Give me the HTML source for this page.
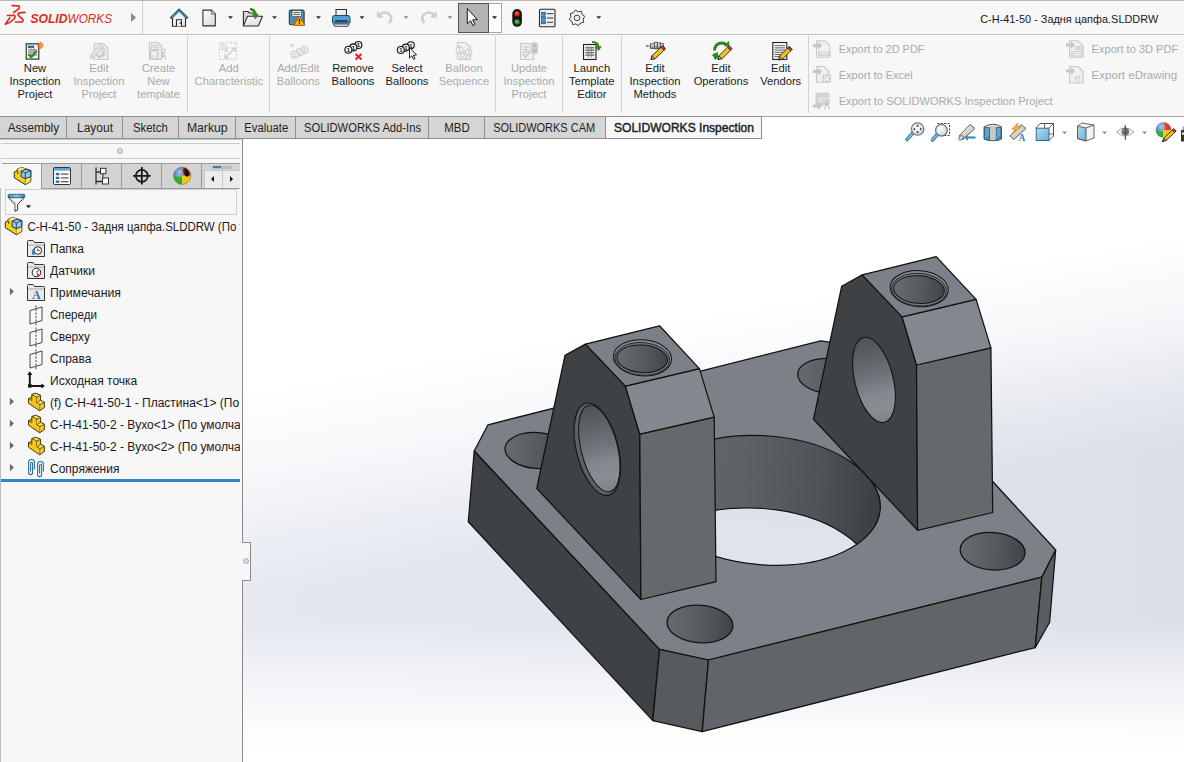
<!DOCTYPE html>
<html><head><meta charset="utf-8"><title>SOLIDWORKS</title>
<style>html,body{margin:0;padding:0;width:1184px;height:762px;overflow:hidden;background:#f7f7f7;font-family:'Liberation Sans', sans-serif;}</style>
</head><body>
<svg width="1184" height="762" viewBox="0 0 1184 762" style="display:block;font-family:'Liberation Sans', sans-serif"><rect x="0" y="0" width="1184" height="762" fill="#f7f7f7"/>
<defs><linearGradient id="vband" gradientUnits="userSpaceOnUse" x1="243" y1="0" x2="1184" y2="0"><stop offset="0" stop-color="#e5e8f1"/><stop offset="1" stop-color="#dcdfe9"/></linearGradient><linearGradient id="vtop" gradientUnits="userSpaceOnUse" x1="243" y1="390" x2="276.7" y2="594.4"><stop offset="0" stop-color="#ffffff" stop-opacity="1"/><stop offset="0.38" stop-color="#ffffff" stop-opacity="0.72"/><stop offset="0.71" stop-color="#ffffff" stop-opacity="0.3"/><stop offset="1" stop-color="#ffffff" stop-opacity="0"/></linearGradient><linearGradient id="vbot" gradientUnits="userSpaceOnUse" x1="0" y1="620" x2="0" y2="762"><stop offset="0" stop-color="#ffffff" stop-opacity="0"/><stop offset="0.352" stop-color="#ffffff" stop-opacity="0.45"/><stop offset="0.81" stop-color="#ffffff" stop-opacity="0.95"/><stop offset="1" stop-color="#ffffff" stop-opacity="1"/></linearGradient></defs>
<rect x="243" y="117" width="941" height="645" fill="url(#vband)"/>
<rect x="243" y="117" width="941" height="645" fill="url(#vtop)"/>
<rect x="243" y="117" width="941" height="645" fill="url(#vbot)"/>
<rect x="0" y="0" width="1184" height="1" fill="#b9b9b9"/>
<rect x="0" y="34" width="1184" height="1" fill="#c4c4c4"/>
<rect x="142" y="1" width="1" height="33" fill="#cfcfcf"/>
<rect x="0" y="116" width="1184" height="1" fill="#a6a6a6"/>
<rect x="187" y="36" width="1" height="77" fill="#d2d2d2"/>
<rect x="269" y="36" width="1" height="77" fill="#d2d2d2"/>
<rect x="495" y="36" width="1" height="77" fill="#d2d2d2"/>
<rect x="562" y="36" width="1" height="77" fill="#d2d2d2"/>
<rect x="621" y="36" width="1" height="77" fill="#d2d2d2"/>
<rect x="808" y="36" width="1" height="77" fill="#d2d2d2"/>
<rect x="0" y="117" width="761" height="21" fill="#d5d5d5"/>
<rect x="66" y="117" width="1" height="21" fill="#8e8e8e"/>
<text x="7.7" y="132" font-size="12.5" fill="#1e1e1e" font-weight="400" text-anchor="start" textLength="51.5" lengthAdjust="spacingAndGlyphs">Assembly</text>
<rect x="122" y="117" width="1" height="21" fill="#8e8e8e"/>
<text x="77" y="132" font-size="12.5" fill="#1e1e1e" font-weight="400" text-anchor="start" textLength="36" lengthAdjust="spacingAndGlyphs">Layout</text>
<rect x="178" y="117" width="1" height="21" fill="#8e8e8e"/>
<text x="133" y="132" font-size="12.5" fill="#1e1e1e" font-weight="400" text-anchor="start" textLength="34.7" lengthAdjust="spacingAndGlyphs">Sketch</text>
<rect x="235" y="117" width="1" height="21" fill="#8e8e8e"/>
<text x="186.9" y="132" font-size="12.5" fill="#1e1e1e" font-weight="400" text-anchor="start" textLength="40.7" lengthAdjust="spacingAndGlyphs">Markup</text>
<rect x="295" y="117" width="1" height="21" fill="#8e8e8e"/>
<text x="244.3" y="132" font-size="12.5" fill="#1e1e1e" font-weight="400" text-anchor="start" textLength="43.9" lengthAdjust="spacingAndGlyphs">Evaluate</text>
<rect x="428" y="117" width="1" height="21" fill="#8e8e8e"/>
<text x="304" y="132" font-size="12.5" fill="#1e1e1e" font-weight="400" text-anchor="start" textLength="117" lengthAdjust="spacingAndGlyphs">SOLIDWORKS Add-Ins</text>
<rect x="484" y="117" width="1" height="21" fill="#8e8e8e"/>
<text x="444.3" y="132" font-size="12.5" fill="#1e1e1e" font-weight="400" text-anchor="start" textLength="25.4" lengthAdjust="spacingAndGlyphs">MBD</text>
<rect x="605" y="117" width="1" height="21" fill="#8e8e8e"/>
<text x="493.2" y="132" font-size="12.5" fill="#1e1e1e" font-weight="400" text-anchor="start" textLength="102" lengthAdjust="spacingAndGlyphs">SOLIDWORKS CAM</text>
<rect x="0" y="116" width="761" height="1" fill="#8e8e8e"/>
<rect x="0" y="138" width="762" height="1" fill="#8e8e8e"/>
<rect x="606" y="117" width="155" height="21" fill="#f7f7f7"/>
<rect x="761" y="116" width="1" height="23" fill="#8e8e8e"/>
<text x="614" y="132" font-size="12.5" fill="#1e1e1e" font-weight="400" text-anchor="start" textLength="140" lengthAdjust="spacingAndGlyphs" stroke="#1e1e1e" stroke-width="0.45">SOLIDWORKS Inspection</text>
<rect x="0" y="139" width="242" height="623" fill="#f7f7f7"/>
<rect x="242" y="139" width="1" height="623" fill="#8a8a8a"/>
<rect x="0" y="188" width="1" height="574" fill="#bdbdbd"/>
<rect x="0" y="139" width="242" height="1" fill="#b3cbd0"/>
<rect x="1" y="143" width="239" height="1" fill="#cdcdcd"/>
<rect x="1" y="158" width="239" height="1" fill="#cdcdcd"/>
<circle cx="120" cy="151" r="2.6" fill="#d8d8d8" stroke="#a8a8a8" stroke-width="0.8"/>
<rect x="2" y="163" width="238" height="1" fill="#9a9a9a"/>
<rect x="41" y="164" width="199" height="24" fill="#d3d3d3"/>
<rect x="2" y="164" width="39" height="25" fill="#f7f7f7"/>
<rect x="41" y="188" width="199" height="1" fill="#9a9a9a"/>
<rect x="41" y="164" width="1" height="24" fill="#9a9a9a"/>
<rect x="81" y="164" width="1" height="24" fill="#9a9a9a"/>
<rect x="121" y="164" width="1" height="24" fill="#9a9a9a"/>
<rect x="161" y="164" width="1" height="24" fill="#9a9a9a"/>
<rect x="201" y="164" width="1" height="24" fill="#9a9a9a"/>
<rect x="204" y="170" width="36" height="18" fill="#ececec"/>
<rect x="204" y="170" width="36" height="1" fill="#c8c8c8"/>
<rect x="204" y="170" width="1" height="18" fill="#c8c8c8"/>
<rect x="222" y="170" width="1" height="18" fill="#c8c8c8"/>
<polygon points="211,179 214,176 214,182" fill="#111"/>
<polygon points="233,179 230,176 230,182" fill="#111"/>
<rect x="212" y="166" width="20" height="3" fill="#b8bcc0"/>
<rect x="213" y="166" width="8" height="2" fill="#3b7fb8"/>
<rect x="5.5" y="189.5" width="231" height="25" fill="#f7f7f7" stroke="#cfcfcf" stroke-width="1"/>
<clipPath id="treeclip"><rect x="0" y="215" width="240" height="265"/></clipPath>
<g clip-path="url(#treeclip)">
<text x="27.5" y="231" font-size="12" fill="#1a1a1a" font-weight="400" text-anchor="start" textLength="275.6" lengthAdjust="spacingAndGlyphs">С-Н-41-50 - Задня цапфа.SLDDRW (По умолчанию)</text>
<text x="50" y="253" font-size="12" fill="#1a1a1a" font-weight="400" text-anchor="start">Папка</text>
<text x="50" y="275" font-size="12" fill="#1a1a1a" font-weight="400" text-anchor="start">Датчики</text>
<text x="50" y="297" font-size="12" fill="#1a1a1a" font-weight="400" text-anchor="start" textLength="71" lengthAdjust="spacingAndGlyphs">Примечания</text>
<polygon points="9.9,287.8 13.9,291.5 9.9,295.2" fill="#6a6a6a"/>
<text x="50" y="319" font-size="12" fill="#1a1a1a" font-weight="400" text-anchor="start" textLength="47" lengthAdjust="spacingAndGlyphs">Спереди</text>
<text x="50" y="341" font-size="12" fill="#1a1a1a" font-weight="400" text-anchor="start">Сверху</text>
<text x="50" y="363" font-size="12" fill="#1a1a1a" font-weight="400" text-anchor="start">Справа</text>
<text x="50" y="385" font-size="12" fill="#1a1a1a" font-weight="400" text-anchor="start">Исходная точка</text>
<text x="50" y="407" font-size="12" fill="#1a1a1a" font-weight="400" text-anchor="start">(f) С-Н-41-50-1 - Пластина&lt;1&gt; (По умолчанию)</text>
<polygon points="9.9,397.8 13.9,401.5 9.9,405.2" fill="#6a6a6a"/>
<text x="50" y="429" font-size="12" fill="#1a1a1a" font-weight="400" text-anchor="start">С-Н-41-50-2 - Вухо&lt;1&gt; (По умолчанию)</text>
<polygon points="9.9,419.8 13.9,423.5 9.9,427.2" fill="#6a6a6a"/>
<text x="50" y="451" font-size="12" fill="#1a1a1a" font-weight="400" text-anchor="start">С-Н-41-50-2 - Вухо&lt;2&gt; (По умолчанию)</text>
<polygon points="9.9,441.8 13.9,445.5 9.9,449.2" fill="#6a6a6a"/>
<text x="50" y="473" font-size="12" fill="#1a1a1a" font-weight="400" text-anchor="start">Сопряжения</text>
<polygon points="9.9,463.8 13.9,467.5 9.9,471.2" fill="#6a6a6a"/>
</g>
<rect x="1" y="479" width="239" height="3" fill="#2e86c6"/>
<path d="M242.5,542.5 H250.5 V580.5 H242.5" fill="#f7f7f7" stroke="#8a8a8a" stroke-width="1"/>
<rect x="242" y="543" width="2" height="37" fill="#f7f7f7"/>
<circle cx="246" cy="561" r="2.6" fill="#d8d8d8" stroke="#a8a8a8" stroke-width="0.8"/>
<defs><linearGradient id="gwall" x1="0" y1="0" x2="1" y2="0"><stop offset="0" stop-color="#65696d"/><stop offset="0.4" stop-color="#5e6266"/><stop offset="0.75" stop-color="#4e5155"/><stop offset="0.92" stop-color="#414447"/><stop offset="1" stop-color="#3c3f42"/></linearGradient><linearGradient id="ghole" x1="0" y1="0" x2="1" y2="0"><stop offset="0" stop-color="#676b70"/><stop offset="0.25" stop-color="#606367"/><stop offset="0.55" stop-color="#56595d"/><stop offset="0.8" stop-color="#4a4d51"/><stop offset="1" stop-color="#404347"/></linearGradient><linearGradient id="gside" x1="0" y1="0" x2="0" y2="1"><stop offset="0" stop-color="#4f5257"/><stop offset="0.15" stop-color="#585b60"/><stop offset="0.45" stop-color="#6e7278"/><stop offset="0.68" stop-color="#84888f"/><stop offset="0.85" stop-color="#888c93"/><stop offset="1" stop-color="#7e8288"/></linearGradient><linearGradient id="gthru" x1="0" y1="0" x2="0" y2="1"><stop offset="0" stop-color="#dfe2ea"/><stop offset="1" stop-color="#e3e6ee"/></linearGradient></defs>
<polygon points="488,424.8 820.7,340.8 870,348 1055.7,550 1041.8,577.2 708.5,660 659.5,649.4 474.2,451" fill="#7c8188" stroke="#111111" stroke-width="1.25" stroke-linejoin="round"/>
<polygon points="474.2,451 659.5,649.4 652.8,720.6 468.3,521.8" fill="#3f4244" stroke="#111111" stroke-width="1.25" stroke-linejoin="round"/>
<polygon points="659.5,649.4 708.5,660 702.2,731.6 652.8,720.6" fill="#575a5e" stroke="#111111" stroke-width="1.25" stroke-linejoin="round"/>
<polygon points="708.5,660 1041.8,577.2 1035.2,647.6 702.2,731.6" fill="#616468" stroke="#111111" stroke-width="1.25" stroke-linejoin="round"/>
<polygon points="1041.8,577.2 1055.7,550 1049.6,622.3 1035.2,647.6" fill="#5a5e61" stroke="#111111" stroke-width="1.25" stroke-linejoin="round"/>
<ellipse cx="537" cy="450.5" rx="32" ry="18" transform="rotate(4 537 450.5)" fill="url(#ghole)" stroke="#111111" stroke-width="1.25" stroke-linejoin="round"/>
<ellipse cx="829.6" cy="375.9" rx="32" ry="17.5" transform="rotate(4 829.6 375.9)" fill="url(#ghole)" stroke="#111111" stroke-width="1.25" stroke-linejoin="round"/>
<ellipse cx="700" cy="624" rx="33" ry="18.7" transform="rotate(4 700 624)" fill="url(#ghole)" stroke="#111111" stroke-width="1.25" stroke-linejoin="round"/>
<ellipse cx="992.6" cy="551.2" rx="32.5" ry="18.7" transform="rotate(4 992.6 551.2)" fill="url(#ghole)" stroke="#111111" stroke-width="1.25" stroke-linejoin="round"/>
<clipPath id="bigtop"><ellipse cx="764.6" cy="500.3" rx="116" ry="64.5" transform="rotate(4.5 764.6 500.3)"/></clipPath>
<ellipse cx="764.6" cy="500.3" rx="116" ry="64.5" transform="rotate(4.5 764.6 500.3)" fill="url(#gwall)"/>
<g clip-path="url(#bigtop)"><ellipse cx="758.3000000000001" cy="572.8" rx="116" ry="64.5" transform="rotate(4.5 758.3000000000001 572.8)" fill="url(#gthru)" stroke="#111111" stroke-width="1.25" stroke-linejoin="round"/></g>
<ellipse cx="764.6" cy="500.3" rx="116" ry="64.5" transform="rotate(4.5 764.6 500.3)" fill="none" stroke="#111111" stroke-width="1.25" stroke-linejoin="round"/>
<polygon points="565,355.4 585.5,344.1 625.4,386.1 639.8,434.2 640.9,599.5 536.8,488.5" fill="#3f4245" stroke="#111111" stroke-width="1.25" stroke-linejoin="round"/>
<polygon points="639.8,434.2 714.2,417.1 716,581.7 640.9,599.5" fill="#66696c" stroke="#111111" stroke-width="1.25" stroke-linejoin="round"/>
<polygon points="625.4,386.1 699.4,368.6 714.2,417.1 639.8,434.2" fill="#84888f" stroke="#111111" stroke-width="1.25" stroke-linejoin="round"/>
<polygon points="585.5,344.1 659.5,325.8 699.4,368.6 625.4,386.1" fill="#7c8088" stroke="#111111" stroke-width="1.25" stroke-linejoin="round"/>
<ellipse cx="642.5" cy="357.8" rx="29.1" ry="18" transform="rotate(4 642.5 358)" fill="#858a8f" stroke="#141414" stroke-width="1"/>
<ellipse cx="642.4" cy="358.9" rx="27.4" ry="16.3" transform="rotate(4 642.5 358)" fill="#74787d" stroke="#141414" stroke-width="0.8"/>
<ellipse cx="642.3" cy="358.8" rx="25.4" ry="13.8" transform="rotate(4 642.5 358)" fill="url(#ghole)" stroke="#141414" stroke-width="1"/>
<ellipse cx="597.3" cy="449.2" rx="20.9" ry="47.3" transform="rotate(-14 597.3 449.2)" fill="#5d6165" stroke="#141414" stroke-width="1.1"/>
<ellipse cx="599.3" cy="448.4" rx="18.2" ry="44.5" transform="rotate(-14 599.3 448.4)" fill="url(#gside)" stroke="#141414" stroke-width="1"/>
<polygon points="841.7,286.2 862.2,274.90000000000003 902.0999999999999,316.90000000000003 916.5,365.0 917.5999999999999,530.3 813.5,419.3" fill="#3f4245" stroke="#111111" stroke-width="1.25" stroke-linejoin="round"/>
<polygon points="916.5,365.0 990.9000000000001,347.90000000000003 992.7,512.5 917.5999999999999,530.3" fill="#66696c" stroke="#111111" stroke-width="1.25" stroke-linejoin="round"/>
<polygon points="902.0999999999999,316.90000000000003 976.0999999999999,299.40000000000003 990.9000000000001,347.90000000000003 916.5,365.0" fill="#84888f" stroke="#111111" stroke-width="1.25" stroke-linejoin="round"/>
<polygon points="862.2,274.90000000000003 936.2,256.6 976.0999999999999,299.40000000000003 902.0999999999999,316.90000000000003" fill="#7c8088" stroke="#111111" stroke-width="1.25" stroke-linejoin="round"/>
<ellipse cx="919.2" cy="288.6" rx="29.1" ry="18" transform="rotate(4 919.2 288.8)" fill="#858a8f" stroke="#141414" stroke-width="1"/>
<ellipse cx="919.1" cy="289.7" rx="27.4" ry="16.3" transform="rotate(4 919.2 288.8)" fill="#74787d" stroke="#141414" stroke-width="0.8"/>
<ellipse cx="919.0" cy="289.6" rx="25.4" ry="13.8" transform="rotate(4 919.2 288.8)" fill="url(#ghole)" stroke="#141414" stroke-width="1"/>
<ellipse cx="874" cy="379.9" rx="19.2" ry="43.7" transform="rotate(-14 874 379.9)" fill="url(#gside)" stroke="#141414" stroke-width="1.1"/>
<text x="35" y="71.9" font-size="11.2" fill="#1c1c1c" font-weight="400" text-anchor="middle">New</text>
<text x="35" y="84.80000000000001" font-size="11.2" fill="#1c1c1c" font-weight="400" text-anchor="middle">Inspection</text>
<text x="35" y="97.7" font-size="11.2" fill="#1c1c1c" font-weight="400" text-anchor="middle">Project</text>
<text x="99" y="71.9" font-size="11.2" fill="#aaaaaa" font-weight="400" text-anchor="middle">Edit</text>
<text x="99" y="84.80000000000001" font-size="11.2" fill="#aaaaaa" font-weight="400" text-anchor="middle">Inspection</text>
<text x="99" y="97.7" font-size="11.2" fill="#aaaaaa" font-weight="400" text-anchor="middle">Project</text>
<text x="158.5" y="71.9" font-size="11.2" fill="#aaaaaa" font-weight="400" text-anchor="middle">Create</text>
<text x="158.5" y="84.80000000000001" font-size="11.2" fill="#aaaaaa" font-weight="400" text-anchor="middle">New</text>
<text x="158.5" y="97.7" font-size="11.2" fill="#aaaaaa" font-weight="400" text-anchor="middle">template</text>
<text x="228.8" y="71.9" font-size="11.2" fill="#aaaaaa" font-weight="400" text-anchor="middle">Add</text>
<text x="228.8" y="84.80000000000001" font-size="11.2" fill="#aaaaaa" font-weight="400" text-anchor="middle">Characteristic</text>
<text x="298.3" y="71.9" font-size="11.2" fill="#aaaaaa" font-weight="400" text-anchor="middle">Add/Edit</text>
<text x="298.3" y="84.80000000000001" font-size="11.2" fill="#aaaaaa" font-weight="400" text-anchor="middle">Balloons</text>
<text x="353" y="71.9" font-size="11.2" fill="#1c1c1c" font-weight="400" text-anchor="middle">Remove</text>
<text x="353" y="84.80000000000001" font-size="11.2" fill="#1c1c1c" font-weight="400" text-anchor="middle">Balloons</text>
<text x="407" y="71.9" font-size="11.2" fill="#1c1c1c" font-weight="400" text-anchor="middle">Select</text>
<text x="407" y="84.80000000000001" font-size="11.2" fill="#1c1c1c" font-weight="400" text-anchor="middle">Balloons</text>
<text x="464" y="71.9" font-size="11.2" fill="#aaaaaa" font-weight="400" text-anchor="middle">Balloon</text>
<text x="464" y="84.80000000000001" font-size="11.2" fill="#aaaaaa" font-weight="400" text-anchor="middle">Sequence</text>
<text x="529" y="71.9" font-size="11.2" fill="#aaaaaa" font-weight="400" text-anchor="middle">Update</text>
<text x="529" y="84.80000000000001" font-size="11.2" fill="#aaaaaa" font-weight="400" text-anchor="middle">Inspection</text>
<text x="529" y="97.7" font-size="11.2" fill="#aaaaaa" font-weight="400" text-anchor="middle">Project</text>
<text x="591.8" y="71.9" font-size="11.2" fill="#1c1c1c" font-weight="400" text-anchor="middle">Launch</text>
<text x="591.8" y="84.80000000000001" font-size="11.2" fill="#1c1c1c" font-weight="400" text-anchor="middle">Template</text>
<text x="591.8" y="97.7" font-size="11.2" fill="#1c1c1c" font-weight="400" text-anchor="middle">Editor</text>
<text x="655" y="71.9" font-size="11.2" fill="#1c1c1c" font-weight="400" text-anchor="middle">Edit</text>
<text x="655" y="84.80000000000001" font-size="11.2" fill="#1c1c1c" font-weight="400" text-anchor="middle">Inspection</text>
<text x="655" y="97.7" font-size="11.2" fill="#1c1c1c" font-weight="400" text-anchor="middle">Methods</text>
<text x="721" y="71.9" font-size="11.2" fill="#1c1c1c" font-weight="400" text-anchor="middle">Edit</text>
<text x="721" y="84.80000000000001" font-size="11.2" fill="#1c1c1c" font-weight="400" text-anchor="middle">Operations</text>
<text x="780.7" y="71.9" font-size="11.2" fill="#1c1c1c" font-weight="400" text-anchor="middle">Edit</text>
<text x="780.7" y="84.80000000000001" font-size="11.2" fill="#1c1c1c" font-weight="400" text-anchor="middle">Vendors</text>
<text x="838.7" y="52.7" font-size="11" fill="#aaaaaa" font-weight="400" text-anchor="start" textLength="85.8" lengthAdjust="spacingAndGlyphs">Export to 2D PDF</text>
<text x="838.7" y="78.6" font-size="11" fill="#aaaaaa" font-weight="400" text-anchor="start" textLength="74" lengthAdjust="spacingAndGlyphs">Export to Excel</text>
<text x="838.7" y="104.7" font-size="11" fill="#aaaaaa" font-weight="400" text-anchor="start" textLength="214" lengthAdjust="spacingAndGlyphs">Export to SOLIDWORKS Inspection Project</text>
<text x="1091.6" y="52.7" font-size="11" fill="#aaaaaa" font-weight="400" text-anchor="start" textLength="86.6" lengthAdjust="spacingAndGlyphs">Export to 3D PDF</text>
<text x="1091.6" y="78.6" font-size="11" fill="#aaaaaa" font-weight="400" text-anchor="start" textLength="85.5" lengthAdjust="spacingAndGlyphs">Export eDrawing</text>
<text x="980.2" y="22.6" font-size="11.5" fill="#1a1a1a" font-weight="400" text-anchor="start" textLength="178" lengthAdjust="spacingAndGlyphs">С-Н-41-50 - Задня цапфа.SLDDRW</text>
<g fill="none" stroke="#dc2a1f" stroke-linecap="round" stroke-linejoin="round"><path d="M12.1,5.6 L18.2,5.9 Q20.2,6.4 18.9,8.6 L13.6,12.6" stroke-width="1.7"/><path d="M7.4,15.5 L14.4,15.4 Q16.2,15.9 13.8,19.2 Q10.5,22.8 5.3,24.3 L9.8,17.7" stroke-width="1.6"/><path d="M24.8,12.4 L19.2,12.8 Q17.4,13.4 18.8,15.8 L22.8,19.4 Q23.6,21.8 21,22 L15.5,22" stroke-width="1.7"/></g>
<text x="30.4" y="22.8" font-size="12" font-weight="700" font-style="italic" fill="#dc2a1f" textLength="37" lengthAdjust="spacingAndGlyphs">SOLID</text>
<text x="67.6" y="22.8" font-size="12" font-weight="400" font-style="italic" fill="#dc2a1f" textLength="44.4" lengthAdjust="spacingAndGlyphs">WORKS</text>
<polygon points="131,13 136,17.5 131,22" fill="#8a8a8a"/>
<g><path d="M172.5,17.5 L179.1,11.5 L185.5,17.5 V26.3 H172.5 Z" fill="#f0f0f0"/><path d="M172.5,18 V26.3 H185.5 V18" fill="none" stroke="#2b2b2b" stroke-width="1.1"/><path d="M176.5,26.3 V19.8 H181.5 V26.3" fill="#f6f6f6" stroke="#2b2b2b" stroke-width="1.1"/><rect x="179.6" y="22.3" width="1.2" height="1.6" fill="#2b2b2b"/><path d="M170.6,18.4 L179.1,10 L187.6,18.4" fill="none" stroke="#1e5a80" stroke-width="2.6" stroke-linejoin="miter"/><path d="M171.6,17.6 L179.1,10.9 L186.6,17.6" fill="none" stroke="#6aaed6" stroke-width="0.9"/></g>
<defs><linearGradient id="gdoc" x1="0" y1="0" x2="1" y2="1"><stop offset="0" stop-color="#ffffff"/><stop offset="1" stop-color="#d8d8d8"/></linearGradient></defs>
<path d="M202.9,10.1 H211.5 L215.3,13.9 V25.9 H202.9 Z" fill="url(#gdoc)" stroke="#2e2e2e" stroke-width="1.1" stroke-linejoin="round"/>
<path d="M211.3,10.3 V14.1 H215.1" fill="#d0d0d0" stroke="#555" stroke-width="0.8"/>
<polygon points="228,16.3 233,16.3 230.5,19.1" fill="#333"/>
<path d="M243.4,26 V11.5 H248 L249.5,13 H256 V16" fill="#d9d9d9" stroke="#2e2e2e" stroke-width="1.1" stroke-linejoin="round"/>
<path d="M243.4,26 L247.5,16.2 H262.5 L258.3,26 Z" fill="url(#gdoc)" stroke="#2e2e2e" stroke-width="1.1" stroke-linejoin="round"/>
<path d="M250,9 Q255,9.5 255.5,15" fill="none" stroke="#2f8a16" stroke-width="2.4"/>
<polygon points="251.8,14.2 259,14.2 255.4,19.2" fill="#2f8a16"/>
<polygon points="272,16.3 277,16.3 274.5,19.1" fill="#333"/>
<rect x="289.3" y="10" width="14.8" height="14.8" rx="1.6" fill="#4a8fbd" stroke="#1f3f58" stroke-width="1.1"/>
<rect x="292" y="10.6" width="9.5" height="6" fill="#f2f2f2" stroke="#333" stroke-width="0.6"/>
<rect x="293.3" y="12" width="6.8" height="0.9" fill="#555"/><rect x="293.3" y="14" width="6.8" height="0.9" fill="#555"/>
<rect x="292.3" y="19.3" width="7" height="5" fill="#7a7a7a"/>
<polygon points="299.4,16.3 304.8,25.4 294,25.4" fill="#f5c400" stroke="#c85a10" stroke-width="1" stroke-linejoin="round"/>
<rect x="298.8" y="19" width="1.3" height="3.3" fill="#111"/><rect x="298.8" y="23" width="1.3" height="1.2" fill="#111"/>
<polygon points="316,16.3 321,16.3 318.5,19.1" fill="#333"/>
<rect x="336" y="9.5" width="10.5" height="9" fill="url(#gdoc)" stroke="#2e2e2e" stroke-width="1"/>
<path d="M332.5,17.5 Q332.5,15.5 334.5,15.5 H348 Q350,15.5 350,17.5 V23 H332.5 Z" fill="#4ea0d0" stroke="#1d4a6a" stroke-width="1"/>
<rect x="335" y="20.2" width="12.5" height="1.6" fill="#0f3550"/>
<path d="M333.5,24 H349 L348,26.3 H334.5 Z" fill="#f5f5f5" stroke="#333" stroke-width="0.9"/>
<polygon points="359.5,16.3 364.5,16.3 362.0,19.1" fill="#333"/>
<path d="M379,15 Q385,10 390,15 Q393,19 389,23" fill="none" stroke="#cfcfcf" stroke-width="2.6"/>
<polygon points="377,11 377,18 383.5,17.5" fill="#cfcfcf"/>
<polygon points="403.5,16.3 408.5,16.3 406.0,19.1" fill="#8f8f8f"/>
<path d="M434.5,15 Q428.5,10 423.5,15 Q420.5,19 424.5,23" fill="none" stroke="#cfcfcf" stroke-width="2.6"/>
<polygon points="436.5,11 436.5,18 430,17.5" fill="#cfcfcf"/>
<polygon points="447.5,16.3 452.5,16.3 450.0,19.1" fill="#8f8f8f"/>
<rect x="458.5" y="3.5" width="43" height="29" fill="#fdfdfd" stroke="#a8a8a8" stroke-width="1"/>
<rect x="458.5" y="3.5" width="30" height="29" fill="#b4b4b4" stroke="#555" stroke-width="1"/>
<path d="M467.3,8.5 V23.8 L470.6,20.8 L473,25.6 L475,24.6 L472.7,19.9 L477.3,19.6 Z" fill="#fafafa" stroke="#1a1a1a" stroke-width="1" stroke-linejoin="round"/>
<polygon points="492,16.2 497,16.2 494.5,19.0" fill="#222"/>
<rect x="512.3" y="9" width="9.6" height="17.8" rx="4.8" fill="#161616"/>
<circle cx="517.1" cy="13.8" r="2.6" fill="#e0261b"/><circle cx="517.1" cy="21.9" r="2.6" fill="#2f9a22"/>
<circle cx="516.6" cy="13.2" r="0.9" fill="#ff9d90"/><circle cx="516.6" cy="21.3" r="0.9" fill="#a6e59a"/>
<rect x="539.5" y="9.3" width="15.5" height="17.5" rx="1" fill="#f0f0f0" stroke="#2a2a2a" stroke-width="1.1"/>
<rect x="541.3" y="12.2" width="4.2" height="3" fill="#3b8dc4" stroke="#1c4f75" stroke-width="0.6"/>
<rect x="547" y="13.2" width="6.3" height="1" fill="#333"/>
<rect x="541.3" y="16.5" width="4.2" height="3" fill="#3b8dc4" stroke="#1c4f75" stroke-width="0.6"/>
<rect x="547" y="17.5" width="6.3" height="1" fill="#333"/>
<rect x="541.3" y="20.8" width="4.2" height="3" fill="#3b8dc4" stroke="#1c4f75" stroke-width="0.6"/>
<rect x="547" y="21.8" width="6.3" height="1" fill="#333"/>
<polygon points="584.85,16.34 583.08,19.11 583.65,22.34 580.44,23.06 578.56,25.75 575.79,23.98 572.56,24.55 571.84,21.34 569.15,19.46 570.92,16.69 570.35,13.46 573.56,12.74 575.44,10.05 578.21,11.82 581.44,11.25 582.16,14.46" fill="#f2f2f2" stroke="#3a3a3a" stroke-width="1" stroke-linejoin="round"/>
<circle cx="577" cy="17.9" r="2.8" fill="#f8f8f8" stroke="#3a3a3a" stroke-width="1"/>
<polygon points="596.3,16.3 601.3,16.3 598.8,19.1" fill="#333"/>
<rect x="26.2" y="43.8" width="12.6" height="15.3" fill="#f4f4f4" stroke="#222" stroke-width="1.1"/>
<rect x="28" y="45.6" width="6" height="2.4" fill="#1d5f8f"/>
<rect x="28" y="49.2" width="9" height="1.6" fill="#9a9a9a"/>
<rect x="28" y="51.6" width="9" height="1.6" fill="#9a9a9a"/>
<rect x="28" y="54" width="9" height="1.6" fill="#9a9a9a"/>
<rect x="30.6" y="45.6" width="0.8" height="11" fill="#9a9a9a"/><rect x="33.6" y="45.6" width="0.8" height="11" fill="#9a9a9a"/>
<path d="M28.3,54.2 L31.2,57.2 L36.6,51" fill="none" stroke="#2e8f1c" stroke-width="2.2"/>
<polygon points="44.00,45.30 41.60,45.80 42.95,47.85 40.90,46.50 40.40,48.90 39.90,46.50 37.85,47.85 39.20,45.80 36.80,45.30 39.20,44.80 37.85,42.75 39.90,44.10 40.40,41.70 40.90,44.10 42.95,42.75 41.60,44.80" fill="#f6b21a" stroke="#d2541a" stroke-width="0.5"/>
<path d="M94.3,43.5 H103.5 L107.8,48 V59.5 H94.3 Z" fill="#f0f0f0" stroke="#c9c9c9" stroke-width="1.2"/>
<rect x="100" y="48.5" width="6" height="1" fill="#c9c9c9"/>
<rect x="100" y="51.5" width="6" height="1" fill="#c9c9c9"/>
<rect x="100" y="54.5" width="6" height="1" fill="#c9c9c9"/>
<rect x="102.5" y="47" width="0.9" height="11" fill="#c9c9c9"/>
<path d="M96.5,54.5 L99.5,57.5 L105.5,51.5" fill="none" stroke="#c9c9c9" stroke-width="1.8"/>
<path d="M90.5,55.5 L100.5,43.5 L103.5,46 L93.5,58 Z" fill="#e2e2e2" stroke="#c9c9c9" stroke-width="1"/>
<path d="M90.5,55.5 L90,58.5 L93.5,58" fill="#d4d4d4" stroke="#c9c9c9" stroke-width="0.8"/>
<path d="M149.5,42.5 H158 L161.5,46 V59.5 H149.5 Z" fill="#f0f0f0" stroke="#c9c9c9" stroke-width="1.2"/>
<rect x="151.5" y="45" width="7" height="4.5" fill="none" stroke="#c9c9c9" stroke-width="0.9"/><path d="M151.5,47.2 H158.5 M155,45 V49.5" stroke="#c9c9c9" stroke-width="0.8"/>
<rect x="150.5" y="50.5" width="7.5" height="8.5" fill="#e4e4e4" stroke="#c9c9c9" stroke-width="1.1"/><rect x="152.3" y="52" width="4" height="3" fill="#f4f4f4"/>
<circle cx="163.5" cy="51" r="1.9" fill="none" stroke="#c9c9c9" stroke-width="1.1"/><path d="M163.5,52.8 L161,59.8 M163.5,52.8 L166,59.8 M161.8,56.5 H165.2" stroke="#c9c9c9" stroke-width="1.1"/>
<rect x="219.5" y="42.8" width="17" height="16.5" fill="none" stroke="#c9c9c9" stroke-width="1" stroke-dasharray="2,1.5"/>
<path d="M222,43.5 V51 L224,49 L226,52 L227.3,51.3 L225.5,48.3 L228.5,48 Z" fill="#f0f0f0" stroke="#c9c9c9" stroke-width="0.9"/>
<path d="M225,58 L235,48 M231,48 H235 V52 M225,54 V58 H229" fill="none" stroke="#c9c9c9" stroke-width="1.1"/>
<circle cx="304.5" cy="50.0" r="3.5" fill="#f2f2f2" stroke="#c9c9c9" stroke-width="1.1"/><text x="304.5" y="52.3" font-size="6" font-weight="700" text-anchor="middle" fill="#c9c9c9">1</text><circle cx="299.5" cy="52.4" r="3.5" fill="#f2f2f2" stroke="#c9c9c9" stroke-width="1.1"/><text x="299.5" y="54.699999999999996" font-size="6" font-weight="700" text-anchor="middle" fill="#c9c9c9">1</text><circle cx="294.5" cy="54.8" r="3.5" fill="#f2f2f2" stroke="#c9c9c9" stroke-width="1.1"/><text x="294.5" y="57.099999999999994" font-size="6" font-weight="700" text-anchor="middle" fill="#c9c9c9">1</text>
<polygon points="294.40,45.60 292.54,45.91 293.64,47.44 292.11,46.34 291.80,48.20 291.49,46.34 289.96,47.44 291.06,45.91 289.20,45.60 291.06,45.29 289.96,43.76 291.49,44.86 291.80,43.00 292.11,44.86 293.64,43.76 292.54,45.29" fill="#c9c9c9"/>
<circle cx="358.4" cy="45.0" r="3.5" fill="#f2f2f2" stroke="#111" stroke-width="1.1"/><text x="358.4" y="47.3" font-size="6" font-weight="700" text-anchor="middle" fill="#111">1</text><circle cx="353.4" cy="47.4" r="3.5" fill="#f2f2f2" stroke="#111" stroke-width="1.1"/><text x="353.4" y="49.699999999999996" font-size="6" font-weight="700" text-anchor="middle" fill="#111">1</text><circle cx="348.4" cy="49.8" r="3.5" fill="#f2f2f2" stroke="#111" stroke-width="1.1"/><text x="348.4" y="52.099999999999994" font-size="6" font-weight="700" text-anchor="middle" fill="#111">1</text>
<path d="M355.5,54 L361.5,59.5 M361.5,54 L355.5,59.5" stroke="#e0231a" stroke-width="2"/>
<circle cx="410.8" cy="45.2" r="3.5" fill="#f2f2f2" stroke="#111" stroke-width="1.1"/><text x="410.8" y="47.5" font-size="6" font-weight="700" text-anchor="middle" fill="#111">1</text><circle cx="405.8" cy="47.6" r="3.5" fill="#f2f2f2" stroke="#111" stroke-width="1.1"/><text x="405.8" y="49.9" font-size="6" font-weight="700" text-anchor="middle" fill="#111">1</text><circle cx="400.8" cy="50" r="3.5" fill="#f2f2f2" stroke="#111" stroke-width="1.1"/><text x="400.8" y="52.3" font-size="6" font-weight="700" text-anchor="middle" fill="#111">1</text>
<path d="M409.5,47.5 V58 L411.8,55.8 L413.5,59.3 L415,58.6 L413.3,55.2 L416.5,55 Z" fill="#fafafa" stroke="#111" stroke-width="0.9" stroke-linejoin="round"/>
<path d="M457.5,42.5 H465.5 L470.5,47 V59.5 H457.5 Z" fill="#f0f0f0" stroke="#c9c9c9" stroke-width="1.1"/>
<circle cx="459.5" cy="50" r="3.6" fill="#f4f4f4" stroke="#c9c9c9" stroke-width="1"/><text x="459.5" y="52.4" font-size="6.5" text-anchor="middle" fill="#b8b8b8">1</text>
<circle cx="468.5" cy="52.5" r="3.6" fill="#f4f4f4" stroke="#c9c9c9" stroke-width="1"/><text x="468.5" y="54.9" font-size="6.5" text-anchor="middle" fill="#b8b8b8">3</text>
<circle cx="463.5" cy="56" r="3.6" fill="#f4f4f4" stroke="#c9c9c9" stroke-width="1"/><text x="463.5" y="58.4" font-size="6.5" text-anchor="middle" fill="#b8b8b8">2</text>
<path d="M520.5,43.5 H530.5 L533.5,46.5 V59.5 H520.5 Z" fill="#f0f0f0" stroke="#c9c9c9" stroke-width="1.2"/>
<rect x="522.5" y="46.5" width="8" height="0.9" fill="#c9c9c9"/>
<rect x="522.5" y="49" width="8" height="0.9" fill="#c9c9c9"/>
<rect x="522.5" y="51.5" width="8" height="0.9" fill="#c9c9c9"/>
<rect x="525.5" y="45.5" width="0.9" height="8" fill="#c9c9c9"/>
<path d="M522.5,53.5 L525.5,57 L530.5,51.5" fill="none" stroke="#c9c9c9" stroke-width="1.7"/>
<rect x="531" y="42" width="7" height="12.5" rx="3.5" fill="#cdcdcd"/>
<circle cx="534.5" cy="45.6" r="1.7" fill="#bdbdbd"/><circle cx="534.5" cy="50.8" r="1.7" fill="#bdbdbd"/>
<rect x="583.5" y="44.5" width="12.5" height="15" fill="#f0f0f0" stroke="#222" stroke-width="1.1"/>
<rect x="585.3" y="47" width="9" height="1.4" fill="#777"/>
<rect x="585.3" y="49.5" width="9" height="1.4" fill="#777"/>
<rect x="585.3" y="52" width="9" height="1.4" fill="#777"/>
<rect x="585.3" y="54.5" width="9" height="1.4" fill="#777"/>
<rect x="587.8" y="46.5" width="0.8" height="11" fill="#777"/><rect x="590.8" y="46.5" width="0.8" height="11" fill="#777"/>
<path d="M592,42 Q598,42 598.5,47" fill="none" stroke="#2f8a16" stroke-width="2.2"/>
<polygon points="595,46.3 602,46.3 598.5,51" fill="#2f8a16"/>
<circle cx="647" cy="46" r="0.9" fill="#e0231a"/><path d="M647.5,46 H651" stroke="#666" stroke-width="0.9"/>
<defs><linearGradient id="gmet" x1="0" y1="0" x2="0" y2="1"><stop offset="0" stop-color="#ffffff"/><stop offset="1" stop-color="#8a8a8a"/></linearGradient></defs>
<rect x="650.5" y="43.8" width="4" height="4.5" fill="url(#gmet)" stroke="#444" stroke-width="0.8"/>
<rect x="654.3" y="42.3" width="3" height="6.5" fill="url(#gmet)" stroke="#444" stroke-width="0.8"/>
<rect x="657.3" y="42.8" width="3" height="5.8" fill="url(#gmet)" stroke="#444" stroke-width="0.8"/>
<rect x="660.3" y="43.5" width="3" height="4.5" fill="url(#gmet)" stroke="#444" stroke-width="0.8"/>
<polygon points="654.80,58.98 664.07,50.27 661.12,47.14 651.86,55.84" fill="#f5c21b" stroke="#222" stroke-width="0.9" stroke-linejoin="round"/><polygon points="664.07,50.27 665.67,48.77 662.73,45.63 661.12,47.14" fill="#e0333a" stroke="#222" stroke-width="0.9" stroke-linejoin="round"/><polygon points="651.00,59.60 654.80,58.98 651.86,55.84" fill="#f1dcb0" stroke="#222" stroke-width="0.9" stroke-linejoin="round"/><circle cx="651.66" cy="58.98" r="0.9" fill="#222"/>
<path d="M714.5,50.5 Q715,43.5 721.5,43 Q725.5,43 727,45.5" fill="none" stroke="#2b8a1a" stroke-width="3"/>
<polygon points="724,46.5 729.5,46.5 728.8,40.8" fill="#2b8a1a"/>
<path d="M715,53.5 Q714,57 716.5,59" fill="none" stroke="#2b8a1a" stroke-width="2.8"/>
<polygon points="711.5,55.5 718,52 718,58" fill="#2b8a1a"/>
<polygon points="721.79,58.89 730.54,50.28 727.52,47.21 718.77,55.82" fill="#f5c21b" stroke="#222" stroke-width="0.9" stroke-linejoin="round"/><polygon points="730.54,50.28 732.11,48.73 729.09,45.67 727.52,47.21" fill="#e0333a" stroke="#222" stroke-width="0.9" stroke-linejoin="round"/><polygon points="718.00,59.60 721.79,58.89 718.77,55.82" fill="#f1dcb0" stroke="#222" stroke-width="0.9" stroke-linejoin="round"/><circle cx="718.64" cy="58.97" r="0.9" fill="#222"/>
<rect x="772.8" y="42.5" width="14" height="17" fill="#f6f6f6" stroke="#222" stroke-width="1.1"/>
<rect x="774.6" y="45.2" width="10.4" height="0.9" fill="#555"/>
<rect x="774.6" y="47.4" width="10.4" height="0.9" fill="#555"/>
<rect x="774.6" y="49.6" width="10.4" height="0.9" fill="#555"/>
<rect x="774.6" y="51.8" width="10.4" height="0.9" fill="#555"/>
<rect x="774.6" y="54" width="10.4" height="0.9" fill="#555"/>
<rect x="774.6" y="56.2" width="10.4" height="0.9" fill="#555"/>
<polygon points="782.38,59.26 790.76,50.88 787.72,47.84 779.34,56.22" fill="#f5c21b" stroke="#222" stroke-width="0.9" stroke-linejoin="round"/><polygon points="790.76,50.88 792.32,49.32 789.28,46.28 787.72,47.84" fill="#e0333a" stroke="#222" stroke-width="0.9" stroke-linejoin="round"/><polygon points="778.60,60.00 782.38,59.26 779.34,56.22" fill="#f1dcb0" stroke="#222" stroke-width="0.9" stroke-linejoin="round"/><circle cx="779.24" cy="59.36" r="0.9" fill="#222"/>
<path d="M816.5,40.8 H825 L829.8,45.6 V57.3 H816.5 Z" fill="#f0f0f0" stroke="#c9c9c9" stroke-width="1.1"/>
<rect x="818" y="50.8" width="12.7" height="5.2" fill="#cfcfcf"/><text x="824.3" y="55.3" font-size="4.8" font-weight="700" text-anchor="middle" fill="#f5f5f5">PDF</text>
<path d="M813,44.0 H818 V41.6 L822,45.6 L818,49.6 V47.2 H813 Z" fill="#c6c6c6"/>
<path d="M816.5,66.5 H824 L828.5,71 V82.3 H816.5 Z" fill="#f0f0f0" stroke="#c9c9c9" stroke-width="1.1"/>
<rect x="822.5" y="74.5" width="8.5" height="8" fill="#cfcfcf"/><path d="M824,76 L829.5,81 M829.5,76 L824,81" stroke="#f5f5f5" stroke-width="1.3"/>
<path d="M813,69.9 H818 V67.5 L822,71.5 L818,75.5 V73.1 H813 Z" fill="#c6c6c6"/>
<rect x="815.5" y="92.5" width="14" height="13" rx="2" fill="#d2d2d2"/>
<text x="818" y="102" font-size="7" font-weight="700" fill="#f0f0f0">S</text><text x="823" y="102" font-size="7" font-weight="700" fill="#f0f0f0">W</text>
<circle cx="827" cy="101.5" r="1.8" fill="none" stroke="#bdbdbd" stroke-width="1"/><path d="M827,103 L824.5,109.5 M827,103 L829.5,109.5" stroke="#bdbdbd" stroke-width="1"/>
<path d="M813,104.4 H818 V102 L822,106 L818,110 V107.6 H813 Z" fill="#c6c6c6"/>
<path d="M1069.5,40.8 H1078 L1083,45.8 V57.3 H1069.5 Z" fill="#f0f0f0" stroke="#c9c9c9" stroke-width="1.1"/>
<text x="1078.5" y="49.5" font-size="6" font-weight="700" text-anchor="middle" fill="#c2c2c2">3D</text>
<rect x="1071" y="51" width="12.5" height="5.5" fill="#cfcfcf"/><text x="1077.2" y="55.5" font-size="4.8" font-weight="700" text-anchor="middle" fill="#f5f5f5">PDF</text>
<path d="M1066,43.4 H1071 V41 L1075,45 L1071,49 V46.6 H1066 Z" fill="#c6c6c6"/>
<path d="M1069.5,66.5 H1078 L1083,71.5 V83 H1069.5 Z" fill="#f0f0f0" stroke="#c9c9c9" stroke-width="1.1"/>
<text x="1077.5" y="81.8" font-size="11" text-anchor="middle" fill="#cdcdcd">e</text>
<path d="M1066,69.4 H1071 V67 L1075,71 L1071,75 V72.6 H1066 Z" fill="#c6c6c6"/>
<g transform="translate(5,217) scale(1.0)"><path d="M0.3,5.1 L2.6,4 L3.2,2.2 L7.5,0.3 L12,1.9 L16.8,3.6 V14.5 L11.3,17.7 L0.3,10.8 Z" fill="#f6cf1e" stroke="#3a300a" stroke-width="1" stroke-linejoin="round"/><path d="M3.2,2.2 L7.5,0.3 L12,1.9 L7.8,3.9 Z" fill="#f3e28a"/><path d="M2.6,4 L3.8,4.7 V7" fill="none" stroke="#3a300a" stroke-width="0.9"/><path d="M11.3,11.6 V17.7" fill="none" stroke="#8a6a10" stroke-width="0.8"/><path d="M11.8,12 L16.3,10 V14.3 L11.8,17" fill="#fbe16a"/><path d="M7.2,4.2 L11.9,2.3 L16.8,3.6 V9.6 L11.3,11.6 L7.2,9.8 Z" fill="#92cdea" stroke="#123a58" stroke-width="1" stroke-linejoin="round"/><path d="M7.2,4.2 L11.3,6 L16.8,3.6 M11.3,6 V11.6" fill="none" stroke="#123a58" stroke-width="0.9"/></g>
<path d="M27.5,256.5 V241.5 Q27.5,240.5 28.5,240.5 H33 L34.5,242.5 H43.5 Q44.5,242.5 44.5,243.5 V256.5 Z" fill="#e9e9e9" stroke="#333" stroke-width="1" stroke-linejoin="round"/><path d="M28,245 H44" stroke="#9a9a9a" stroke-width="0.8"/>
<circle cx="37.8" cy="250.5" r="3.8" fill="#fafafa" stroke="#222" stroke-width="1"/><path d="M37.8,248.5 V250.7 H39.8" stroke="#222" stroke-width="0.8" fill="none"/>
<path d="M34.5,249 Q31.5,251 33.5,254" fill="none" stroke="#2d7fc1" stroke-width="1.6"/><polygon points="31.3,252.5 35.5,252.5 33.2,255.5" fill="#2d7fc1"/>
<path d="M27.5,278.5 V263.5 Q27.5,262.5 28.5,262.5 H33 L34.5,264.5 H43.5 Q44.5,264.5 44.5,265.5 V278.5 Z" fill="#e9e9e9" stroke="#333" stroke-width="1" stroke-linejoin="round"/><path d="M28,267 H44" stroke="#9a9a9a" stroke-width="0.8"/>
<circle cx="36.5" cy="272.5" r="4.3" fill="#fafafa" stroke="#222" stroke-width="1"/><path d="M36.5,272.5 L39,269.8" stroke="#2d7fc1" stroke-width="1.2"/><path d="M36.5,272.5 L40,275 A4.3,4.3 0 0 1 37.5,276.7 Z" fill="#e0331f"/>
<path d="M27.5,300.5 V285.5 Q27.5,284.5 28.5,284.5 H33 L34.5,286.5 H43.5 Q44.5,286.5 44.5,287.5 V300.5 Z" fill="#e9e9e9" stroke="#333" stroke-width="1" stroke-linejoin="round"/><path d="M28,289 H44" stroke="#9a9a9a" stroke-width="0.8"/>
<text x="36.4" y="299.3" font-size="11.5" font-family="Liberation Serif" font-weight="700" text-anchor="middle" fill="#2d6fa6">A</text>
<path d="M30.0,310.5 L42.0,307.0 V320.5 L30.0,324.0 Z" fill="none" stroke="#333" stroke-width="0.9" stroke-linejoin="round"/><path d="M36.0,305.5 V325.5" stroke="#333" stroke-width="0.9" stroke-dasharray="2.2,1.3"/>
<path d="M30.0,332.5 L42.0,329.0 V342.5 L30.0,346.0 Z" fill="none" stroke="#333" stroke-width="0.9" stroke-linejoin="round"/><path d="M36.0,327.5 V347.5" stroke="#333" stroke-width="0.9" stroke-dasharray="2.2,1.3"/>
<path d="M30.0,354.5 L42.0,351.0 V364.5 L30.0,368.0 Z" fill="none" stroke="#333" stroke-width="0.9" stroke-linejoin="round"/><path d="M36.0,349.5 V369.5" stroke="#333" stroke-width="0.9" stroke-dasharray="2.2,1.3"/>
<path d="M29.8,373 V386 H42" fill="none" stroke="#151515" stroke-width="1.9"/>
<rect x="28" y="384.2" width="3.6" height="3.4" fill="#151515"/>
<polygon points="29.8,371.3 27.2,375 32.4,375" fill="#151515"/><polygon points="45,386 41.3,383.5 41.3,388.5" fill="#151515"/>
<g transform="translate(28,393)"><path d="M0.5,5.6 L3.8,4 V1.6 L7.8,0.3 L12.6,2.4 V7.4 L16.4,9.3 V14.6 L11.6,17.8 L0.5,10.2 Z" fill="#f3c81a" stroke="#4a3a08" stroke-width="1" stroke-linejoin="round"/><path d="M3.8,1.6 L7.8,0.3 L12.6,2.4 L8.8,4 Z" fill="#fbe57a" stroke="#4a3a08" stroke-width="0.8" stroke-linejoin="round"/><path d="M8.8,4 V9.8" stroke="#4a3a08" stroke-width="0.8"/><path d="M8.8,9.8 L12.6,7.4 L16.4,9.3 L12,11.6 Z" fill="#fbe57a" stroke="#4a3a08" stroke-width="0.8" stroke-linejoin="round"/><path d="M12,11.6 V17.5 M0.5,5.6 L3.8,7.5 V4" fill="none" stroke="#4a3a08" stroke-width="0.8"/><path d="M9.5,5 V9.5 M12.8,12 V16.5" stroke="#fdf0a0" stroke-width="0.6"/></g>
<g transform="translate(28,415)"><path d="M0.5,5.6 L3.8,4 V1.6 L7.8,0.3 L12.6,2.4 V7.4 L16.4,9.3 V14.6 L11.6,17.8 L0.5,10.2 Z" fill="#f3c81a" stroke="#4a3a08" stroke-width="1" stroke-linejoin="round"/><path d="M3.8,1.6 L7.8,0.3 L12.6,2.4 L8.8,4 Z" fill="#fbe57a" stroke="#4a3a08" stroke-width="0.8" stroke-linejoin="round"/><path d="M8.8,4 V9.8" stroke="#4a3a08" stroke-width="0.8"/><path d="M8.8,9.8 L12.6,7.4 L16.4,9.3 L12,11.6 Z" fill="#fbe57a" stroke="#4a3a08" stroke-width="0.8" stroke-linejoin="round"/><path d="M12,11.6 V17.5 M0.5,5.6 L3.8,7.5 V4" fill="none" stroke="#4a3a08" stroke-width="0.8"/><path d="M9.5,5 V9.5 M12.8,12 V16.5" stroke="#fdf0a0" stroke-width="0.6"/></g>
<g transform="translate(28,437)"><path d="M0.5,5.6 L3.8,4 V1.6 L7.8,0.3 L12.6,2.4 V7.4 L16.4,9.3 V14.6 L11.6,17.8 L0.5,10.2 Z" fill="#f3c81a" stroke="#4a3a08" stroke-width="1" stroke-linejoin="round"/><path d="M3.8,1.6 L7.8,0.3 L12.6,2.4 L8.8,4 Z" fill="#fbe57a" stroke="#4a3a08" stroke-width="0.8" stroke-linejoin="round"/><path d="M8.8,4 V9.8" stroke="#4a3a08" stroke-width="0.8"/><path d="M8.8,9.8 L12.6,7.4 L16.4,9.3 L12,11.6 Z" fill="#fbe57a" stroke="#4a3a08" stroke-width="0.8" stroke-linejoin="round"/><path d="M12,11.6 V17.5 M0.5,5.6 L3.8,7.5 V4" fill="none" stroke="#4a3a08" stroke-width="0.8"/><path d="M9.5,5 V9.5 M12.8,12 V16.5" stroke="#fdf0a0" stroke-width="0.6"/></g>
<g transform="translate(0,0)"><path d="M34.4,469.6 V461.8 Q34.4,459.4 31.5,459.4 Q28.6,459.4 28.6,461.8 V472.5 Q28.6,474.6 30.6,474.6 Q32.6,474.6 32.6,472.5 V463.5 Q32.6,462.2 31.6,462.2 Q30.6,462.2 30.6,463.5 V471.5" fill="none" stroke="#226d9c" stroke-width="1.05"/></g>
<g transform="translate(9,2)"><path d="M34.4,469.6 V461.8 Q34.4,459.4 31.5,459.4 Q28.6,459.4 28.6,461.8 V472.5 Q28.6,474.6 30.6,474.6 Q32.6,474.6 32.6,472.5 V463.5 Q32.6,462.2 31.6,462.2 Q30.6,462.2 30.6,463.5 V471.5" fill="none" stroke="#226d9c" stroke-width="1.05"/></g>
<defs><radialGradient id="glens" cx="0.4" cy="0.35" r="0.7"><stop offset="0" stop-color="#ffffff"/><stop offset="1" stop-color="#c9d3da"/></radialGradient><linearGradient id="gcube" x1="0" y1="0" x2="1" y2="1"><stop offset="0" stop-color="#b6dcef"/><stop offset="1" stop-color="#6aaed0"/></linearGradient><linearGradient id="gtel" x1="0" y1="0" x2="1" y2="1"><stop offset="0" stop-color="#ffffff"/><stop offset="1" stop-color="#a8a8a8"/></linearGradient></defs>
<path d="M912.5,133.5 L907,139.5" stroke="#3f7fa8" stroke-width="3.6" stroke-linecap="round"/>
<path d="M912.5,133.5 L907,139.5" stroke="#7cc0e4" stroke-width="1.6" stroke-linecap="round"/>
<circle cx="917.6" cy="129" r="6.2" fill="url(#glens)" stroke="#707a80" stroke-width="1.3"/>
<path d="M917.6,124.6 L916,126.4 H919.2 Z M917.6,133.4 L916,131.6 H919.2 Z M913.2,129 L915,127.4 V130.6 Z M922,129 L920.2,127.4 V130.6 Z" fill="#333"/>
<rect x="937.5" y="123.5" width="12" height="12" fill="none" stroke="#333" stroke-width="1" stroke-dasharray="2,1.4"/>
<path d="M937.5,134 L932.5,140" stroke="#3f7fa8" stroke-width="3.6" stroke-linecap="round"/>
<path d="M937.5,134 L932.5,140" stroke="#7cc0e4" stroke-width="1.6" stroke-linecap="round"/>
<circle cx="941.4" cy="130.2" r="5.8" fill="url(#glens)" stroke="#707a80" stroke-width="1.3"/>
<path d="M959,136 L970,124.5 L975,128.5 L963,139.5 Z" fill="url(#gtel)" stroke="#555" stroke-width="0.9" stroke-linejoin="round"/>
<ellipse cx="961" cy="137.8" rx="2.6" ry="1.8" transform="rotate(-45 961 137.8)" fill="#ddd" stroke="#555" stroke-width="0.8"/>
<path d="M966.5,137.5 H975.5" stroke="#3f8fc0" stroke-width="2.2"/><polygon points="964,137.5 968,134.3 968,140.7" fill="#3f8fc0"/>
<path d="M984,127 Q993,121.5 1001.5,127 V139 Q993,142.5 984,139 Z" fill="#e8e8e8" stroke="#444" stroke-width="0.9"/>
<path d="M984.5,127.5 H989.5 V140.5 Q986,140 984.5,139 Z" fill="#4a90bd" stroke="#2b5773" stroke-width="0.8"/>
<path d="M996,127.5 H1001 V139 Q999.5,140 996,140.5 Z" fill="#4a90bd" stroke="#2b5773" stroke-width="0.8"/>
<path d="M985,131 L988.8,128 M985,134 L988.8,131 M985,137 L988.8,134 M996.5,131 L1000.5,128 M996.5,134 L1000.5,131 M996.5,137 L1000.5,134" stroke="#bfe0f2" stroke-width="0.7"/>
<rect x="990" y="126" width="5.5" height="14" fill="#c8c8c8"/>
<path d="M1010,136 L1021,124.5 L1026,128.5 L1014,139.5 Z" fill="url(#gtel)" stroke="#555" stroke-width="0.9" stroke-linejoin="round"/>
<polygon points="1012,129 1018,123 1016.5,127 1021,127 1013,133 1015.5,129.5" fill="#f5c21b" stroke="#d05a10" stroke-width="0.6"/>
<text x="1022" y="141" font-size="9.5" font-family="Liberation Serif" font-weight="700" text-anchor="middle" fill="#3f7fa8">A</text>
<path d="M1036,128 L1040,123.5 H1053.5 V136 L1049,140.5" fill="#fafafa" stroke="#444" stroke-width="0.9"/>
<path d="M1049,128 L1053.5,123.5 M1044.5,124 V128 M1049,134 H1053" stroke="#444" stroke-width="0.8"/>
<rect x="1036.2" y="128.2" width="12.8" height="12.3" fill="url(#gcube)" stroke="#2f6e94" stroke-width="1"/>
<polygon points="1062,131.5 1067,131.5 1064.5,134.3" fill="#8a8a8a"/>
<path d="M1077.5,126 L1082,123 L1094,125 V138 L1086,141 L1077.5,138.5 Z" fill="#f2f2f2" stroke="#555" stroke-width="0.9" stroke-linejoin="round"/>
<path d="M1077.5,126 L1086,128 V141 L1077.5,138.5 Z" fill="url(#gcube)" stroke="#555" stroke-width="0.9"/>
<path d="M1086,128 L1094,125" stroke="#555" stroke-width="0.9"/>
<polygon points="1102,131.5 1107,131.5 1104.5,134.3" fill="#8a8a8a"/>
<path d="M1116.5,132 Q1125,123.5 1134,132 Q1125,140 1116.5,132 Z" fill="#f2f2f2" stroke="#a8a8a8" stroke-width="1"/>
<circle cx="1125.3" cy="131.5" r="3.8" fill="#6c6c6c"/><circle cx="1124.3" cy="130.5" r="1.3" fill="#9a9a9a"/>
<path d="M1125.3,125 V139.8" stroke="#444" stroke-width="1.1"/>
<polygon points="1142,131.5 1147,131.5 1144.5,134.3" fill="#8a8a8a"/>
<path d="M1163.5,130 L1155.7,130 A7.8,7.8 0 0 1 1163.5,122.2 Z" fill="#3b7fd0"/>
<path d="M1163.5,130 V122.2 A7.8,7.8 0 0 1 1171.3,130 Z" fill="#d83a3a"/>
<path d="M1163.5,130 H1155.7 A7.8,7.8 0 0 0 1163.5,137.8 Z" fill="#3aa845"/>
<path d="M1163.5,130 V137.8 A7.8,7.8 0 0 0 1171.3,130 Z" fill="#f2c81a"/>
<circle cx="1163.5" cy="130" r="7.8" fill="url(#gball)"/>
<polygon points="1165.99,140.64 1174.57,132.55 1172.23,130.07 1163.66,138.17" fill="#f5c21b" stroke="#222" stroke-width="0.9" stroke-linejoin="round"/><polygon points="1174.57,132.55 1176.17,131.04 1173.83,128.56 1172.23,130.07" fill="#e0333a" stroke="#222" stroke-width="0.9" stroke-linejoin="round"/><polygon points="1162.50,141.60 1165.99,140.64 1163.66,138.17" fill="#f1dcb0" stroke="#222" stroke-width="0.9" stroke-linejoin="round"/><circle cx="1163.15" cy="140.98" r="0.9" fill="#222"/>
<rect x="1181" y="130" width="3" height="11.5" fill="#333"/><rect x="1182" y="132.5" width="2" height="2.2" fill="#e8e8e8"/><rect x="1182.5" y="126.5" width="1.5" height="3.5" fill="#6ab0dc"/>
<g transform="translate(14,167) scale(1.0)"><path d="M0.3,5.1 L2.6,4 L3.2,2.2 L7.5,0.3 L12,1.9 L16.8,3.6 V14.5 L11.3,17.7 L0.3,10.8 Z" fill="#f6cf1e" stroke="#3a300a" stroke-width="1" stroke-linejoin="round"/><path d="M3.2,2.2 L7.5,0.3 L12,1.9 L7.8,3.9 Z" fill="#f3e28a"/><path d="M2.6,4 L3.8,4.7 V7" fill="none" stroke="#3a300a" stroke-width="0.9"/><path d="M11.3,11.6 V17.7" fill="none" stroke="#8a6a10" stroke-width="0.8"/><path d="M11.8,12 L16.3,10 V14.3 L11.8,17" fill="#fbe16a"/><path d="M7.2,4.2 L11.9,2.3 L16.8,3.6 V9.6 L11.3,11.6 L7.2,9.8 Z" fill="#92cdea" stroke="#123a58" stroke-width="1" stroke-linejoin="round"/><path d="M7.2,4.2 L11.3,6 L16.8,3.6 M11.3,6 V11.6" fill="none" stroke="#123a58" stroke-width="0.9"/></g>
<rect x="53.5" y="167.5" width="17" height="17" rx="1.2" fill="#fafafa" stroke="#333" stroke-width="1"/>
<rect x="54" y="168" width="16" height="2.6" fill="#5aa5d6"/>
<rect x="55.8" y="173" width="3.6" height="2.2" fill="#2d6a96"/><rect x="61" y="173.6" width="7.5" height="1" fill="#333"/>
<rect x="55.8" y="176.8" width="3.6" height="2.2" fill="#2d6a96"/><rect x="61" y="177.4" width="7.5" height="1" fill="#333"/>
<rect x="55.8" y="180.6" width="3.6" height="2.2" fill="#2d6a96"/><rect x="61" y="181.2" width="7.5" height="1" fill="#333"/>
<path d="M96,167.5 V184.5 M96,172 H101 M96,181.5 H103" stroke="#333" stroke-width="1.3" fill="none"/>
<rect x="100.5" y="168.3" width="5.4" height="5.4" fill="#fafafa" stroke="#333" stroke-width="1"/>
<rect x="102.5" y="178" width="6" height="6" fill="#fafafa" stroke="#333" stroke-width="1"/>
<path d="M103,174 V178" stroke="#333" stroke-width="1"/>
<circle cx="141.8" cy="175.8" r="6" fill="none" stroke="#1a1a1a" stroke-width="1.8"/>
<path d="M141.8,167 V184.6 M133,175.8 H150.6" stroke="#1a1a1a" stroke-width="1.8"/>
<defs><radialGradient id="gball" cx="0.35" cy="0.3" r="0.75"><stop offset="0" stop-color="#ffffff" stop-opacity="0.6"/><stop offset="0.5" stop-color="#ffffff" stop-opacity="0"/></radialGradient></defs>
<path d="M182.2,175.8 L173.5,175.8 A8.7,8.7 0 0 1 182.2,167.1 Z" fill="#2f76d0"/>
<path d="M182.2,175.8 V167.1 A8.7,8.7 0 0 1 190.9,175.8 Z" fill="#d62a2a"/>
<path d="M182.2,175.8 H173.5 A8.7,8.7 0 0 0 182.2,184.5 Z" fill="#35a53a"/>
<path d="M182.2,175.8 V184.5 A8.7,8.7 0 0 0 190.9,175.8 Z" fill="#f0c419"/>
<ellipse cx="186" cy="172.5" rx="2.6" ry="4.4" transform="rotate(-30 186 172.5)" fill="#111"/>
<circle cx="182.2" cy="175.8" r="8.7" fill="url(#gball)" stroke="#8a6a20" stroke-width="0.5"/>
<defs><linearGradient id="gfb" x1="0" y1="0" x2="1" y2="0"><stop offset="0" stop-color="#2f79a8"/><stop offset="0.5" stop-color="#8fd0f0"/><stop offset="1" stop-color="#2f79a8"/></linearGradient></defs>
<path d="M8.2,197.3 L15,204.5 V211.3 L17.6,210 V204.5 L24.5,197.3 Z" fill="#f4f4f4" stroke="#333" stroke-width="1" stroke-linejoin="round"/>
<path d="M12,199 L15.5,203 V209.5" fill="none" stroke="#bdbdbd" stroke-width="0.9"/>
<rect x="8" y="194.3" width="16.8" height="3.3" rx="1.4" fill="url(#gfb)" stroke="#1f5a80" stroke-width="0.8"/>
<polygon points="26,205.3 31,205.3 28.5,208.3" fill="#222"/></svg>
</body></html>
